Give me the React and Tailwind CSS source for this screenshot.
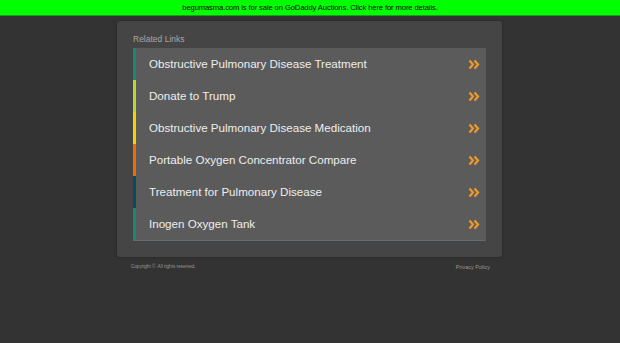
export default function App() {
  const links = [
    ["Obstructive Pulmonary Disease Treatment", "border-[#1a8a6e]"],
    ["Donate to Trump", "border-[#bcd62c]"],
    ["Obstructive Pulmonary Disease Medication", "border-[#f2d200]"],
    ["Portable Oxygen Concentrator Compare", "border-[#f56b00]"],
    ["Treatment for Pulmonary Disease", "border-[#0b4a5c]"],
    ["Inogen Oxygen Tank", "border-[#1a8a6e]"],
  ];
  return (
    <div className="min-h-[343px] bg-[#333333] font-['Liberation_Sans',Arial,sans-serif]">
      <div className="h-[16px] bg-[#00ff00] border-b border-[#1a9a1a] flex items-center justify-center text-[7.6px] text-black tracking-[-0.1px]">
        begumasma.com is for sale on GoDaddy Auctions. Click here for more details.
      </div>
      <div className="w-[385px] ml-[117px] mt-[5px] bg-[#454545] rounded-[3px] shadow-[0_0_3px_rgba(0,0,0,0.3)] px-[16px] pt-[13px] pb-[16px]">
        <div className="text-[8.5px] text-[#a5a5a5] leading-[11px] mb-[3px]">Related Links</div>
        <div className="bg-[#5b5b5b] border-b border-[#626a72]">
          {links.map(([t, c]) => (
            <div key={t} className={`h-[32px] border-l-[3px] ${c} flex items-center justify-between pl-[13px] pr-[6px]`}>
              <span className="text-[11.6px] text-[#eeeeee]">{t}</span>
              <svg width="12" height="11" viewBox="0 0 12 11" fill="none">
                <path d="M1.5 1.5 L5 5.5 L1.5 9.5" stroke="#ee9a2a" strokeWidth="2.2" />
                <path d="M6.5 1.5 L10 5.5 L6.5 9.5" stroke="#ee9a2a" strokeWidth="2.2" />
              </svg>
            </div>
          ))}
        </div>
      </div>
      <div className="w-[385px] ml-[117px] flex justify-between items-center pl-[14px] pr-[12px] pt-[6px] text-[#999999]">
        <span className="text-[4.6px]">Copyright ©. All rights reserved.</span>
        <span className="text-[5.5px]">Privacy Policy</span>
      </div>
    </div>
  );
}
